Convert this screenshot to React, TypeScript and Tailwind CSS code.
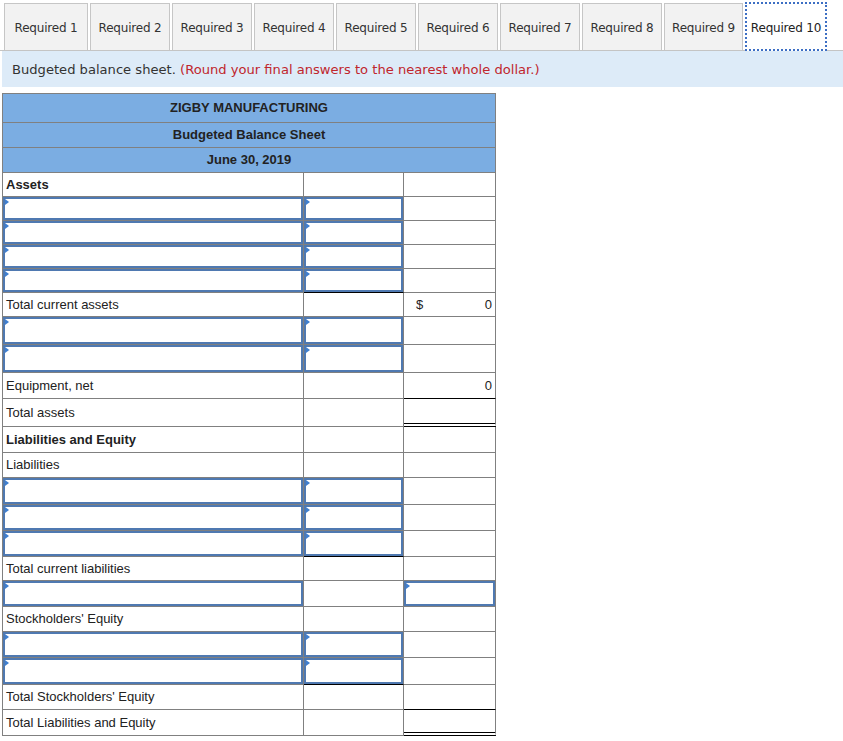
import React from "react";

type Cell =
  | { kind: "text"; text?: string; bold?: boolean }
  | { kind: "input" }
  | { kind: "money"; dollar?: boolean; value: string };

type Bottom = "grey" | "black" | "double";

type Row = {
  h: string;
  c1: Cell;
  c2: Cell;
  c3: Cell;
  b2?: Bottom;
  b3?: Bottom;
};

const E: Cell = { kind: "text" };
const I: Cell = { kind: "input" };

const rows: Row[] = [
  { h: "h-[24px]", c1: { kind: "text", text: "Assets", bold: true }, c2: E, c3: E },
  { h: "h-[24px]", c1: I, c2: I, c3: E },
  { h: "h-[24px]", c1: I, c2: I, c3: E },
  { h: "h-[24px]", c1: I, c2: I, c3: E },
  { h: "h-[24px]", c1: I, c2: I, c3: E, b2: "black" },
  { h: "h-[24px]", c1: { kind: "text", text: "Total current assets" }, c2: E, c3: { kind: "money", dollar: true, value: "0" } },
  { h: "h-[28px]", c1: I, c2: I, c3: E },
  { h: "h-[28px]", c1: I, c2: I, c3: E },
  { h: "h-[26px]", c1: { kind: "text", text: "Equipment, net" }, c2: E, c3: { kind: "money", value: "0" }, b3: "black" },
  { h: "h-[28px]", c1: { kind: "text", text: "Total assets" }, c2: E, c3: E, b3: "double" },
  { h: "h-[26px]", c1: { kind: "text", text: "Liabilities and Equity", bold: true }, c2: E, c3: E },
  { h: "h-[25px]", c1: { kind: "text", text: "Liabilities" }, c2: E, c3: E },
  { h: "h-[27px]", c1: I, c2: I, c3: E },
  { h: "h-[26px]", c1: I, c2: I, c3: E },
  { h: "h-[26px]", c1: I, c2: I, c3: E, b2: "black" },
  { h: "h-[24px]", c1: { kind: "text", text: "Total current liabilities" }, c2: E, c3: E },
  { h: "h-[26px]", c1: I, c2: E, c3: I },
  { h: "h-[25px]", c1: { kind: "text", text: "Stockholders' Equity" }, c2: E, c3: E },
  { h: "h-[26px]", c1: I, c2: I, c3: E },
  { h: "h-[27px]", c1: I, c2: I, c3: E, b2: "black" },
  { h: "h-[25px]", c1: { kind: "text", text: "Total Stockholders' Equity" }, c2: E, c3: E, b3: "black" },
  { h: "h-[26px]", c1: { kind: "text", text: "Total Liabilities and Equity" }, c2: E, c3: E, b3: "double" },
];

function InputBox() {
  return (
    <div className="relative h-full w-full border-2 border-[#4f79b1] bg-white">
      <div className="absolute left-0 top-0 h-0 w-0 border-y-[3px] border-l-[4px] border-y-transparent border-l-[#3f7fd0]" />
    </div>
  );
}

function CellContent({ cell }: { cell: Cell }) {
  if (cell.kind === "input") return <InputBox />;
  if (cell.kind === "money")
    return (
      <div className="flex h-full items-center justify-between pl-[12px] pr-[3px]">
        <span>{cell.dollar ? "$" : ""}</span>
        <span>{cell.value}</span>
      </div>
    );
  return (
    <div className={`flex h-full items-center pl-[3px] ${cell.bold ? "font-bold" : ""}`}>
      {cell.text}
    </div>
  );
}

function bottomClass(b?: Bottom) {
  if (b === "black") return "border-b border-b-black";
  if (b === "double") return "border-b-[4px] border-double border-b-black";
  return "border-b border-b-[#808080]";
}

const tabs = [
  { label: "Required 1", w: "w-[84px]" },
  { label: "Required 2", w: "w-[80px]" },
  { label: "Required 3", w: "w-[80px]" },
  { label: "Required 4", w: "w-[80px]" },
  { label: "Required 5", w: "w-[80px]" },
  { label: "Required 6", w: "w-[80px]" },
  { label: "Required 7", w: "w-[80px]" },
  { label: "Required 8", w: "w-[80px]" },
  { label: "Required 9", w: "w-[79px]" },
];

export default function App() {
  return (
    <div className="min-h-[741px] w-[843px] bg-white">
      {/* Tabs */}
      <div
        className="flex h-[51px] items-start gap-[2px] border-b border-[#c4c4c4] pl-[4px] pt-[3px] text-[12px] text-[#333]"
        style={{ fontFamily: '"DejaVu Sans", Verdana, sans-serif' }}
      >
        {tabs.map((t) => (
          <div
            key={t.label}
            className={`flex h-[47px] ${t.w} shrink-0 items-center justify-center border border-b-0 border-[#c6c6c6] bg-[#f2f2f2] pt-[2px] tracking-[-0.2px]`}
          >
            {t.label}
          </div>
        ))}
        <div className="-mt-[1px] flex h-[49px] w-[82px] shrink-0 items-center justify-center border-2 border-dotted border-[#3d6fc4] bg-white pt-[2px] tracking-[-0.2px] text-[#222]">
          Required 10
        </div>
      </div>

      {/* Instruction band */}
      <div
        className="ml-[2px] flex h-[36px] items-center bg-[#ddebf8] pl-[10px] pt-[2px] text-[13.1px] text-[#333]"
        style={{ fontFamily: '"DejaVu Sans", Verdana, sans-serif' }}
      >
        Budgeted balance sheet.&nbsp;
        <span className="text-[#c0262d]">(Round your final answers to the nearest whole dollar.)</span>
      </div>

      {/* Table */}
      <div
        className="ml-[2px] mt-[6px] w-[494px] border-l border-t border-[#808080] text-[13px] text-[#222]"
        style={{ fontFamily: '"Liberation Sans", Arial, sans-serif' }}
      >
        <div className="flex h-[29px] items-center justify-center border-b border-r border-[#808080] bg-[#7badE2] font-bold">
          ZIGBY MANUFACTURING
        </div>
        <div className="flex h-[25px] items-center justify-center border-b border-r border-[#808080] bg-[#7badE2] font-bold">
          Budgeted Balance Sheet
        </div>
        <div className="flex h-[25px] items-center justify-center border-b border-r border-[#808080] bg-[#7badE2] font-bold">
          June 30, 2019
        </div>
        {rows.map((r, i) => (
          <div key={i} className={`flex ${r.h}`}>
            <div className="h-full w-[301px] shrink-0 border-b border-r border-[#808080]">
              <CellContent cell={r.c1} />
            </div>
            <div className={`h-full w-[100px] shrink-0 border-r border-r-[#808080] ${bottomClass(r.b2)}`}>
              <CellContent cell={r.c2} />
            </div>
            <div className={`h-full w-[92px] shrink-0 border-r border-r-[#808080] ${bottomClass(r.b3)}`}>
              <CellContent cell={r.c3} />
            </div>
          </div>
        ))}
      </div>
    </div>
  );
}
